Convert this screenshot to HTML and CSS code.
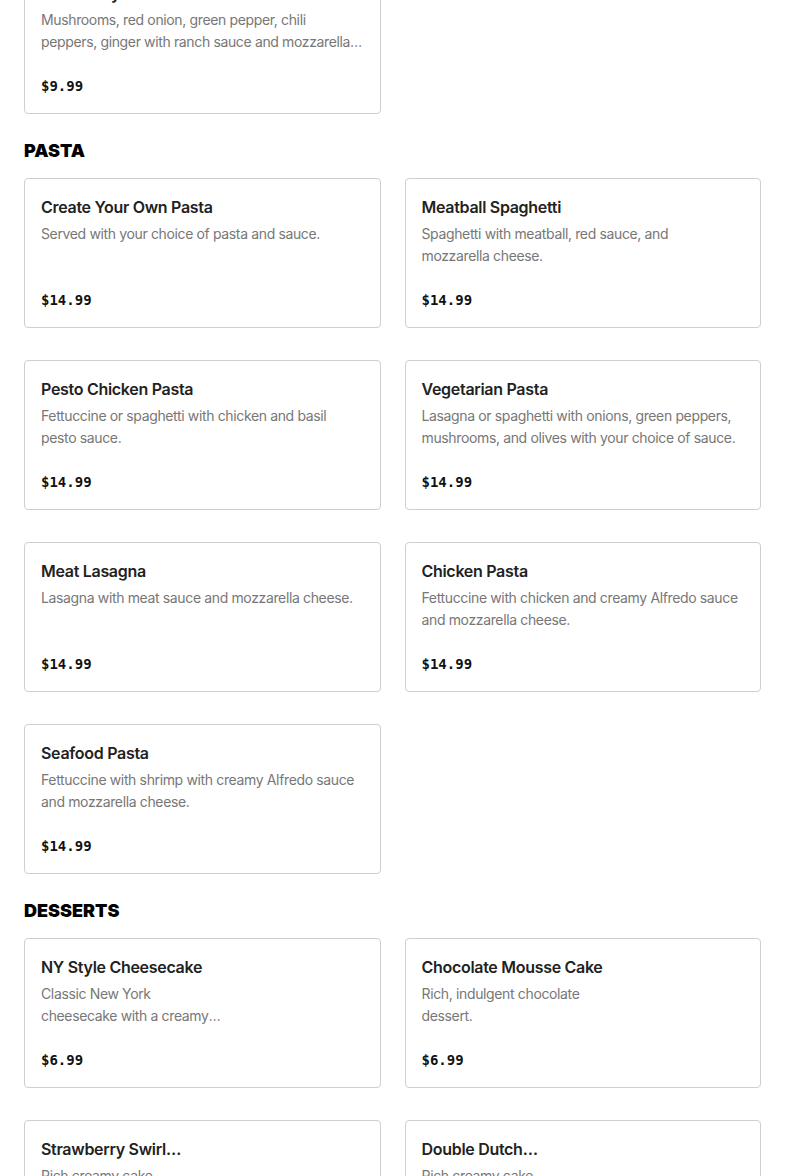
FILE: index.html
```html
<!DOCTYPE html>
<html lang="en">
<head>
  <meta charset="UTF-8" />
  <meta name="viewport" content="width=device-width, initial-scale=1.0" />
  <title>Menu</title>
  <link rel="stylesheet" href="styles.css">
</head>
<body>
  <main class="menu">
    <section class="menu-section cut">
      <div class="item-grid">
        <div class="item-card">
          <h3 class="item-name">Desi Curry Pizza</h3>
          <p class="item-desc">Mushrooms, red onion, green pepper, chili peppers, ginger with ranch sauce and mozzarella cheese.</p>
          <div class="item-price">$9.99</div>
        </div>
      </div>
    </section>

    <section class="menu-section">
      <h2 class="section-title">PASTA</h2>
      <div class="item-grid">
        <div class="item-card">
          <h3 class="item-name">Create Your Own Pasta</h3>
          <p class="item-desc">Served with your choice of pasta and sauce.</p>
          <div class="item-price">$14.99</div>
        </div>
        <div class="item-card">
          <h3 class="item-name">Meatball Spaghetti</h3>
          <p class="item-desc">Spaghetti with meatball, red sauce, and<br>mozzarella cheese.</p>
          <div class="item-price">$14.99</div>
        </div>
        <div class="item-card">
          <h3 class="item-name">Pesto Chicken Pasta</h3>
          <p class="item-desc">Fettuccine or spaghetti with chicken and basil pesto sauce.</p>
          <div class="item-price">$14.99</div>
        </div>
        <div class="item-card">
          <h3 class="item-name">Vegetarian Pasta</h3>
          <p class="item-desc">Lasagna or spaghetti with onions, green peppers, mushrooms, and olives with your choice of sauce.</p>
          <div class="item-price">$14.99</div>
        </div>
        <div class="item-card">
          <h3 class="item-name">Meat Lasagna</h3>
          <p class="item-desc">Lasagna with meat sauce and mozzarella cheese.</p>
          <div class="item-price">$14.99</div>
        </div>
        <div class="item-card">
          <h3 class="item-name">Chicken Pasta</h3>
          <p class="item-desc">Fettuccine with chicken and creamy Alfredo sauce and mozzarella cheese.</p>
          <div class="item-price">$14.99</div>
        </div>
        <div class="item-card">
          <h3 class="item-name">Seafood Pasta</h3>
          <p class="item-desc">Fettuccine with shrimp with creamy Alfredo sauce and mozzarella cheese.</p>
          <div class="item-price">$14.99</div>
        </div>
      </div>
    </section>

    <section class="menu-section">
      <h2 class="section-title">DESSERTS</h2>
      <div class="item-grid">
        <div class="item-card narrow">
          <h3 class="item-name">NY Style Cheesecake</h3>
          <p class="item-desc">Classic New York cheesecake with a creamy graham cracker crust.</p>
          <div class="item-price">$6.99</div>
        </div>
        <div class="item-card narrow">
          <h3 class="item-name">Chocolate Mousse Cake</h3>
          <p class="item-desc">Rich, indulgent chocolate dessert.</p>
          <div class="item-price">$6.99</div>
        </div>
        <div class="item-card narrow">
          <h3 class="item-name">Strawberry Swirl Cheesecake</h3>
          <p class="item-desc">Rich creamy cake<br>with a strawberry swirl.</p>
          <div class="item-price">$6.99</div>
        </div>
        <div class="item-card narrow">
          <h3 class="item-name">Double Dutch Chocolate&nbsp;Cake</h3>
          <p class="item-desc">Rich creamy cake<br>layered with chocolate.</p>
          <div class="item-price">$6.99</div>
        </div>
      </div>
    </section>
  </main>
</body>
</html>
```

FILE: styles.css
```css
body {
  margin: 0;
  font-family: Inter, "Liberation Sans", sans-serif;
  background: #fff;
  color: #222;
}

.menu {
  padding: 0 24px 40px;
}

.menu-section {
  margin-bottom: 25px;
}

/* page is scrolled: first card sits partly above the viewport */
.menu-section.cut {
  margin-top: -36px;
}

.section-title {
  margin: 0 0 15px;
  font-size: 18px;
  line-height: 24px;
  font-weight: 900;
  color: #000;
}

.item-grid {
  display: grid;
  grid-template-columns: 1fr 1fr;
  column-gap: 24px;
  row-gap: 32px;
}

.item-card {
  border: 1px solid #cfcfcf;
  border-radius: 4px;
  padding: 16px 16px 17px;
  background: #fff;
}

.item-name {
  margin: 0 0 4px;
  font-size: 16px;
  line-height: 24px;
  font-weight: 600;
  letter-spacing: -0.3px;
  color: #222;
}

.item-desc {
  margin: 0;
  font-size: 14px;
  line-height: 22px;
  letter-spacing: -0.36px;
  color: #777;
  min-height: 44px;
  display: -webkit-box;
  -webkit-line-clamp: 2;
  -webkit-box-orient: vertical;
  overflow: hidden;
}

.item-price {
  margin-top: 23px;
  font-family: "DejaVu Sans Mono", "Liberation Mono", monospace;
  font-size: 14px;
  line-height: 20px;
  font-weight: bold;
  color: #111;
}

.item-card.narrow .item-name,
.item-card.narrow .item-desc {
  max-width: 182px;
}

.item-card.narrow .item-name {
  display: -webkit-box;
  -webkit-line-clamp: 1;
  -webkit-box-orient: vertical;
  overflow: hidden;
}
```
